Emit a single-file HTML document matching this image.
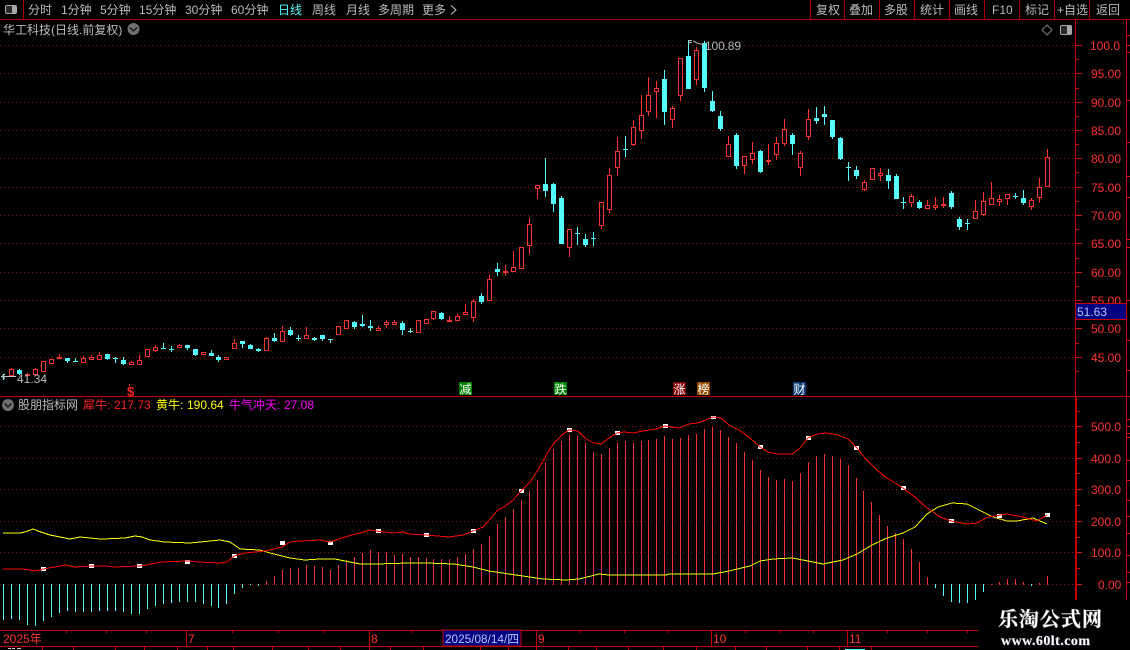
<!DOCTYPE html>
<html lang="zh"><head><meta charset="utf-8"><title>华工科技</title>
<style>
html,body{margin:0;padding:0;background:#000;width:1130px;height:650px;overflow:hidden}
svg{display:block}
text{font-family:"Liberation Sans","WenQuanYi Zen Hei","Noto Sans CJK SC",sans-serif;font-size:12px}
.t{fill:#bcbcbc}
.p{fill:#ff3232}
.c{shape-rendering:crispEdges;fill:none}
</style></head><body>
<svg width="1130" height="650" viewBox="0 0 1130 650" xmlns="http://www.w3.org/2000/svg">
<rect width="1130" height="650" fill="#000"/>

<!-- grid -->
<path class="c" stroke="#7c1212" stroke-dasharray="1 3" d="M0 45.5H1075M0 73.5H1075M0 102.5H1075M0 130.5H1075M0 158.5H1075M0 187.5H1075M0 215.5H1075M0 243.5H1075M0 272.5H1075M0 300.5H1075M0 328.5H1075M0 357.5H1075M0 426.5H1075M0 458.5H1075M0 489.5H1075M0 521.5H1075M0 552.5H1075M0 584.5H1075"/>

<!-- frame -->
<path class="c" stroke="#b40000" d="M0 19.5H1130M23.5 0V19M810.5 0V19M844.5 0V19M879.5 0V19M914.5 0V19M949.5 0V19M984.5 0V19M1019.5 0V19M1054.5 0V19M1089.5 0V19"/>
<path class="c" stroke="#c80000" d="M0 396.5H1130M1126.5 19V600M1075.5 19V397"/>
<path class="c" stroke="#c80000" stroke-width="2" d="M1076 397V600"/>
<path class="c" stroke="#d21414" d="M1076 45.5h6M1076 73.5h6M1076 102.5h6M1076 130.5h6M1076 158.5h6M1076 187.5h6M1076 215.5h6M1076 243.5h6M1076 272.5h6M1076 300.5h6M1076 328.5h6M1076 357.5h6M1076 59.5h3M1076 88.5h3M1076 116.5h3M1076 144.5h3M1076 172.5h3M1076 201.5h3M1076 229.5h3M1076 258.5h3M1076 286.5h3M1076 343.5h3M1076 371.5h3M1077 426.5h5M1077 458.5h5M1077 489.5h5M1077 521.5h5M1077 552.5h5M1077 584.5h5M1077 442.5h3M1077 473.5h3M1077 505.5h3M1077 537.5h3M1077 568.5h3M1077 411.5h3M1127 35.5h3M1127 45.5h3M1127 52.5h3M1127 100.5h3M1127 142.5h3M1127 176.5h3M1127 197.5h3M1127 239.5h3M1127 247.5h3M1127 300.5h3M1127 340.5h3M1127 370.5h3M1127 419.5h3M1127 426.5h3M1127 433.5h3M1127 437.5h3M1127 460.5h3M1127 480.5h3M1127 500.5h3M1127 516.5h3M1127 533.5h3M1127 555.5h3M1127 572.5h3M1127 582.5h3"/>

<!-- time axis -->
<path class="c" stroke="#c80000" d="M0 630.5H978M0 646.5H978M186.5 630v16M369.5 630v16M536.5 630v16M711.5 630v16M847.5 630v16M66.5 630v3M106.5 630v3M146.5 630v3M232.5 630v3M278.5 630v3M323.5 630v3M411.5 630v3M580.5 630v3M624.5 630v3M667.5 630v3M745.5 630v3M779.5 630v3M813.5 630v3M887.5 630v3M927.5 630v3M967.5 630v3M42.5 646v4M73.5 646v4M115.5 646v4M144.5 646v4M177.5 646v4M207.5 646v4M233.5 646v4M272.5 646v4M308.5 646v4M340.5 646v4M369.5 646v4M390.5 646v4M423.5 646v4M480.5 646v4M508.5 646v4M536.5 646v4M568.5 646v4M596.5 646v4M628.5 646v4M663.5 646v4M696.5 646v4M735.5 646v4M766.5 646v4M807.5 646v4M839.5 646v4M871.5 646v4"/>
<rect x="443" y="630" width="78" height="16" fill="#000080" stroke="#c80000" shape-rendering="crispEdges"/>
<text class="p" x="3" y="643">2025年</text>
<text class="p" x="188" y="643">7</text>
<text class="p" x="371" y="643">8</text>
<text x="445" y="643" fill="#b8c8ff" textLength="74" lengthAdjust="spacingAndGlyphs">2025/08/14/四</text>
<text class="p" x="538" y="643">9</text>
<text class="p" x="713" y="643">10</text>
<text class="p" x="849" y="643">11</text>
<path class="c" stroke="#ccc" d="M8 648.5h3M12 648.5h3M17 648.5h4"/>
<path class="c" stroke="#54fcfc" d="M845 649.5h20"/>

<!-- toolbar -->
<rect x="5.5" y="5.5" width="11" height="8" rx="1.5" fill="#2a2a2a" stroke="#a8a8a8"/>
<rect x="12" y="6" width="4" height="7" fill="#a8a8a8"/>
<text class="t" x="28" y="14">分时</text>
<text class="t" x="61" y="14">1分钟</text>
<text class="t" x="100" y="14">5分钟</text>
<text class="t" x="139" y="14">15分钟</text>
<text class="t" x="185" y="14">30分钟</text>
<text class="t" x="231" y="14">60分钟</text>
<text x="278" y="14" fill="#54fcfc">日线</text>
<text class="t" x="312" y="14">周线</text>
<text class="t" x="346" y="14">月线</text>
<text class="t" x="378" y="14">多周期</text>
<text class="t" x="422" y="14">更多</text>
<path d="M451 5.5l5 4.5-5 4.5" fill="none" stroke="#c4c4c4"/>
<text class="t" x="816" y="14">复权</text>
<text class="t" x="849" y="14">叠加</text>
<text class="t" x="884" y="14">多股</text>
<text class="t" x="920" y="14">统计</text>
<text class="t" x="954" y="14">画线</text>
<text class="t" x="992" y="14">F10</text>
<text class="t" x="1025" y="14">标记</text>
<text class="t" x="1057" y="14">+自选</text>
<text class="t" x="1096" y="14">返回</text>

<!-- title -->
<text class="t" x="3" y="34">华工科技(日线.前复权)</text>
<circle cx="133.5" cy="29" r="6" fill="#707070"/>
<path d="M130 27.5l3.5 3.5 3.5-3.5" fill="none" stroke="#111" stroke-width="1.3"/>
<path d="M1047 25l5 5-5 5-5-5z" fill="none" stroke="#808080"/>
<rect x="1060.5" y="25.5" width="11" height="9" rx="1.5" fill="#2a2a2a" stroke="#a8a8a8"/>
<rect x="1067" y="26" width="4" height="8" fill="#a8a8a8"/>

<!-- price labels -->
<text class="p" x="1090" y="50">100.0</text>
<text class="p" x="1091" y="78">95.00</text>
<text class="p" x="1091" y="107">90.00</text>
<text class="p" x="1091" y="135">85.00</text>
<text class="p" x="1091" y="163">80.00</text>
<text class="p" x="1091" y="192">75.00</text>
<text class="p" x="1091" y="220">70.00</text>
<text class="p" x="1091" y="248">65.00</text>
<text class="p" x="1091" y="277">60.00</text>
<text class="p" x="1091" y="305">55.00</text>
<text class="p" x="1091" y="333">50.00</text>
<text class="p" x="1091" y="362">45.00</text>
<rect x="1075.5" y="303.5" width="51" height="16" fill="#000080" stroke="#c80000" shape-rendering="crispEdges"/>
<text x="1077" y="316" fill="#b8c8ff">51.63</text>

<!-- red candles -->
<path class="c" stroke="#ff3232" d="M9.5 369.5h4v6h-4zM11.5 368v1M25.5 374.5h4v1h-4zM27.5 373v1M27.5 376v1M33.5 369.5h4v5h-4zM35.5 368v1M41.5 361.5h4v10h-4zM49.5 359.5h4v4h-4zM57.5 357.5h4v1h-4zM59.5 354v3M81.5 358.5h4v4h-4zM83.5 356v2M89.5 357.5h4v2h-4zM91.5 355v2M97.5 355.5h4v4h-4zM99.5 352v3M129.5 362.5h4v2h-4zM131.5 361v1M137.5 360.5h4v4h-4zM139.5 355v5M145.5 349.5h4v7h-4zM153.5 347.5h4v3h-4zM155.5 345v2M155.5 351v1M177.5 345.5h4v2h-4zM179.5 344v1M201.5 352.5h4v2h-4zM224.5 357.5h4v2h-4zM232.5 343.5h4v5h-4zM234.5 339v4M264.5 338.5h4v12h-4zM266.5 337v1M280.5 331.5h4v10h-4zM282.5 326v5M304.5 335.5h4v3h-4zM306.5 327v8M336.5 326.5h4v8h-4zM344.5 320.5h4v8h-4zM376.5 328.5h4v2h-4zM378.5 326v2M384.5 322.5h4v2h-4zM386.5 320v2M386.5 325v3M392.5 322.5h4v2h-4zM394.5 320v2M416.5 320.5h4v12h-4zM424.5 319.5h4v4h-4zM431.5 311.5h4v7h-4zM433.5 319v1M447.5 320.5h4v1h-4zM449.5 316v4M455.5 316.5h4v4h-4zM457.5 314v2M463.5 312.5h4v2h-4zM465.5 304v8M471.5 301.5h4v16h-4zM473.5 299v2M473.5 318v4M487.5 279.5h4v21h-4zM489.5 275v4M503.5 271.5h4v1h-4zM505.5 265v6M505.5 273v3M511.5 267.5h4v4h-4zM513.5 251v16M519.5 247.5h4v21h-4zM527.5 224.5h4v21h-4zM529.5 218v6M529.5 246v8M535.5 185.5h4v3h-4zM537.5 189v10M567.5 229.5h4v18h-4zM569.5 248v9M599.5 202.5h4v23h-4zM601.5 226v3M607.5 175.5h4v34h-4zM609.5 168v7M609.5 210v3M615.5 151.5h4v16h-4zM617.5 137v14M617.5 168v8M631.5 127.5h4v17h-4zM633.5 120v7M633.5 145v1M639.5 115.5h4v15h-4zM641.5 95v20M641.5 131v8M646.5 95.5h4v16h-4zM648.5 77v18M648.5 112v4M654.5 88.5h4v3h-4zM656.5 81v7M656.5 92v26M670.5 108.5h4v11h-4zM672.5 106v2M672.5 120v8M678.5 58.5h4v37h-4zM680.5 96v5M694.5 50.5h4v29h-4zM696.5 47v3M696.5 80v5M726.5 144.5h4v12h-4zM728.5 136v8M742.5 156.5h4v9h-4zM744.5 166v8M750.5 153.5h4v6h-4zM752.5 142v11M752.5 160v4M766.5 160.5h4v1h-4zM768.5 144v16M768.5 162v3M774.5 143.5h4v11h-4zM776.5 137v6M776.5 155v5M782.5 129.5h4v14h-4zM784.5 119v10M784.5 144v2M798.5 153.5h4v14h-4zM800.5 151v2M800.5 168v8M806.5 119.5h4v17h-4zM808.5 109v10M808.5 137v3M862.5 182.5h4v7h-4zM864.5 180v2M864.5 190v1M870.5 168.5h4v11h-4zM878.5 173.5h4v2h-4zM880.5 168v5M880.5 176v5M909.5 196.5h4v6h-4zM911.5 194v2M911.5 203v4M925.5 205.5h4v3h-4zM927.5 200v5M933.5 205.5h4v2h-4zM935.5 197v8M935.5 208v2M941.5 204.5h4v1h-4zM943.5 197v7M943.5 206v2M973.5 211.5h4v7h-4zM975.5 200v11M981.5 201.5h4v13h-4zM983.5 192v9M983.5 215v1M989.5 198.5h4v6h-4zM991.5 182v16M997.5 199.5h4v2h-4zM999.5 195v4M999.5 201v5M1005.5 194.5h4v4h-4zM1007.5 199v6M1029.5 200.5h4v6h-4zM1031.5 198v2M1031.5 207v3M1037.5 187.5h4v10h-4zM1039.5 178v9M1039.5 198v5M1045.5 157.5h4v29h-4zM1047.5 149v8"/>

<!-- cyan wicks -->
<path class="c" stroke="#54fcfc" d="M3.5 374V380M19.5 369V375M67.5 358V363M75.5 358V362M107.5 354V360M115.5 357V363M123.5 357V365M163.5 343V349M171.5 346V352M187.5 345V350M195.5 349V356M211.5 350V356M218.5 355V362M242.5 341V348M250.5 344V349M258.5 348V352M274.5 333V342M290.5 327V336M298.5 335V341M314.5 337V341M322.5 335V341M330.5 339V343M354.5 321V329M362.5 315V327M370.5 320V331M402.5 321V335M410.5 328V333M441.5 312V320M481.5 293V304M497.5 263V276M545.5 158V197M553.5 183V212M561.5 196V244M577.5 227V245M585.5 234V247M593.5 232V246M625.5 136V157M664.5 70V125M688.5 40V89M704.5 41V92M712.5 91V112M720.5 111V131M736.5 133V169M760.5 150V173M792.5 133V155M816.5 107V124M824.5 106V125M832.5 120V139M840.5 137V160M848.5 162V181M856.5 166V179M888.5 169V189M896.5 174V199M903.5 197V209M919.5 200V209M951.5 191V209M959.5 217V230M967.5 219V230M1015.5 193V199M1023.5 190V205"/>
<!-- cyan bodies -->
<path class="c" stroke="#54fcfc" stroke-width="5" d="M3.5 376V377M19.5 370V374M67.5 358V361M75.5 361V362M107.5 354V359M115.5 358V359M123.5 360V364M163.5 348V349M171.5 349V350M187.5 345V348M195.5 349V355M211.5 353V356M218.5 357V360M242.5 341V344M250.5 345V349M258.5 349V351M274.5 338V341M290.5 330V335M298.5 338V339M314.5 338V340M322.5 335V339M330.5 339V340M354.5 322V327M362.5 324V326M370.5 326V328M402.5 323V330M410.5 331V332M441.5 313V319M481.5 296V302M497.5 269V272M545.5 184V191M553.5 184V204M561.5 198V244M577.5 233V234M585.5 239V245M593.5 238V239M625.5 149V150M664.5 79V112M688.5 56V89M704.5 43V88M712.5 101V111M720.5 116V129M736.5 135V166M760.5 151V172M792.5 135V144M816.5 118V121M824.5 114V117M832.5 120V137M840.5 138V159M848.5 167V168M856.5 170V176M888.5 175V181M896.5 176V199M903.5 202V203M919.5 202V208M951.5 193V207M959.5 219V227M967.5 223V224M1015.5 196V197M1023.5 198V203"/>

<!-- labels on chart -->
<path d="M2 376.5h14M2 376.5l3-2.5M2 376.5l3 2.5" fill="none" stroke="#c4c4c4" class="c"/>
<text class="t" x="17" y="383">41.34</text>
<path d="M689 40.5h3M689 40.5v4M689 42.5h3M693 41l4 2 4 1 3 .5" fill="none" stroke="#b4b4b4"/>
<text x="705" y="50" fill="#b4b4b4" textLength="36">100.89</text>

<!-- tags -->
<text x="127" y="396" fill="#ff2020" font-weight="bold" style="font-size:13px">$</text>
<path class="c" stroke="#ff2020" d="M129.5 384v2"/>
<rect x="459" y="382" width="13" height="13" fill="#008000"/><text x="459.5" y="393.5" fill="#fff">减</text>
<rect x="554" y="382" width="13" height="13" fill="#008000"/><text x="554.5" y="393.5" fill="#fff">跌</text>
<rect x="673" y="382" width="13" height="13" fill="#800000"/><text x="673.5" y="393.5" fill="#fff">涨</text>
<rect x="697" y="382" width="13" height="13" fill="#964b00"/><text x="697.5" y="393.5" fill="#fff">榜</text>
<rect x="793" y="382" width="13" height="13" fill="#0a3c78"/><text x="793.5" y="393.5" fill="#fff">财</text>

<!-- legend -->
<circle cx="8" cy="405" r="6" fill="#707070"/>
<path d="M4.5 403.5l3.5 3.5 3.5-3.5" fill="none" stroke="#111" stroke-width="1.3"/>
<text class="t" x="18" y="409">股朋指标网</text>
<text x="83" y="409" fill="#ff2020">犀牛:</text><text x="114" y="409" fill="#ff2020">217.73</text>
<text x="156" y="409" fill="#ffff00">黄牛:</text><text x="187" y="409" fill="#ffff00">190.64</text>
<text x="229" y="409" fill="#ff00ff">牛气冲天:</text><text x="284" y="409" fill="#ff00ff">27.08</text>

<!-- lower labels -->
<text class="p" x="1091" y="431">500.0</text>
<text class="p" x="1091" y="463">400.0</text>
<text class="p" x="1091" y="494">300.0</text>
<text class="p" x="1091" y="526">200.0</text>
<text class="p" x="1091" y="557">100.0</text>
<text class="p" x="1098" y="589">0.00</text>

<!-- bars -->
<path class="c" stroke="#54fcfc" d="M3.5 584V620M11.5 584V619M19.5 584V620M27.5 584V625M35.5 584V626M43.5 584V621M51.5 584V617M59.5 584V613M67.5 584V611M75.5 584V612M83.5 584V612M91.5 584V612M99.5 584V611M107.5 584V611M115.5 584V611M123.5 584V612M131.5 584V614M139.5 584V614M147.5 584V609M155.5 584V606M163.5 584V604M171.5 584V603M179.5 584V602M187.5 584V602M195.5 584V602M203.5 584V604M211.5 584V606M218.5 584V608M226.5 584V604M234.5 584V594M242.5 584V588M250.5 584V585M258.5 584V586M935.5 584V588M943.5 584V596M951.5 584V602M959.5 584V603M967.5 584V603M975.5 584V600M983.5 584V592M1031.5 584V586"/>
<path class="c" stroke="#f03434" d="M266.5 585V581M274.5 585V576M282.5 585V570M290.5 585V568M298.5 585V568M306.5 585V565M314.5 585V566M322.5 585V567M330.5 585V570M338.5 585V565M346.5 585V560M354.5 585V557M362.5 585V553M370.5 585V550M378.5 585V552M386.5 585V552M394.5 585V555M402.5 585V554M410.5 585V557M418.5 585V557M426.5 585V558M433.5 585V559M441.5 585V559M449.5 585V559M457.5 585V557M465.5 585V554M473.5 585V549M481.5 585V544M489.5 585V536M497.5 585V524M505.5 585V517M513.5 585V509M521.5 585V500M529.5 585V491M537.5 585V480M545.5 585V462M553.5 585V449M561.5 585V441M569.5 585V435M577.5 585V436M585.5 585V443M593.5 585V452M601.5 585V454M609.5 585V448M617.5 585V443M625.5 585V441M633.5 585V443M641.5 585V441M648.5 585V440M656.5 585V439M664.5 585V436M672.5 585V439M680.5 585V438M688.5 585V435M696.5 585V434M704.5 585V429M712.5 585V427M720.5 585V430M728.5 585V437M736.5 585V443M744.5 585V452M752.5 585V460M760.5 585V470M768.5 585V477M776.5 585V480M784.5 585V479M792.5 585V481M800.5 585V473M808.5 585V462M816.5 585V456M824.5 585V454M832.5 585V456M840.5 585V459M848.5 585V465M856.5 585V478M863.5 585V491M871.5 585V502M879.5 585V515M887.5 585V526M895.5 585V533M903.5 585V539M911.5 585V549M919.5 585V562M927.5 585V577M991.5 585V584M999.5 585V582M1007.5 585V579M1015.5 585V579M1023.5 585V582M1039.5 585V583M1047.5 585V576"/>

<!-- markers -->
<g fill="#fff" shape-rendering="crispEdges">
<rect x="41" y="567" width="5" height="4"/><rect x="89" y="564" width="5" height="4"/><rect x="137" y="564" width="5" height="4"/><rect x="185" y="560" width="5" height="4"/><rect x="232" y="554" width="5" height="4"/><rect x="280" y="541" width="5" height="4"/><rect x="328" y="541" width="5" height="4"/><rect x="376" y="529" width="5" height="4"/><rect x="424" y="533" width="5" height="4"/><rect x="471" y="529" width="5" height="4"/><rect x="519" y="489" width="5" height="4"/><rect x="567" y="428" width="5" height="4"/><rect x="615" y="431" width="5" height="4"/><rect x="663" y="424" width="5" height="4"/><rect x="711" y="416" width="5" height="3"/><rect x="758" y="445" width="5" height="4"/><rect x="806" y="436" width="5" height="4"/><rect x="854" y="446" width="5" height="4"/><rect x="901" y="486" width="5" height="4"/><rect x="949" y="519" width="5" height="4"/><rect x="997" y="514" width="5" height="4"/><rect x="1045" y="513" width="5" height="4"/>
</g>

<!-- curves -->
<polyline class="c" stroke="#ffff00" points="3,533 20,533 25,532 33,529 38,531 50,535 60,537 70,539 80,537 100,539 103,539 125,538 135,536 142,537 150,540 165,542 190,543 210,541 220,540 230,542 240,549 260,550 270,553 290,558 305,560 320,559 335,559 350,562 360,564 376,564 409,563 426,563 454,564 473,567 489,571 509,574 523,576 543,579 566,580 579,579 599,574 609,575 666,575 669,574 713,574 729,571 750,566 760,561 773,559 792,558 803,560 823,564 843,560 857,554 872,545 887,538 903,533 915,527 927,514 938,507 952,503 967,504 983,512 993,517 1007,521 1017,521 1033,518 1047,524"/>
<polyline class="c" stroke="#ff0000" points="3,569 23,569 30,570 35,571 43,569 55,567 65,565 75,567 91,566 105,566 115,567 139,566 147,565 160,562 187,561 200,562 220,563 227,562 234,556 245,553 265,551 282,547 290,542 300,541 320,540 330,542 345,537 360,533 370,530 376,531 393,533 403,532 409,534 426,535 449,537 463,535 473,531 483,527 491,518 498,510 504,507 513,500 521,491 531,481 539,468 547,454 554,443 563,434 569,430 578,431 586,439 594,443 601,444 609,438 617,433 624,432 633,433 643,431 656,429 665,426 679,428 689,424 698,423 713,417 721,418 729,425 739,430 750,438 760,447 768,452 777,454 792,454 800,448 808,438 817,434 826,433 838,435 848,439 857,448 865,458 878,471 887,478 903,488 915,497 927,508 940,517 951,521 967,524 977,523 988,517 1007,514 1023,517 1037,521 1047,515"/>

<!-- watermark -->
<text x="998" y="626" fill="#fff" font-weight="bold" style="font-size:20px;font-family:'Noto Serif CJK SC','Noto Sans CJK SC',sans-serif;paint-order:stroke;stroke:#444;stroke-width:1px" textLength="104">乐淘公式网</text>
<text x="1001" y="645" fill="#fff" font-weight="bold" style="font-size:14px;font-family:'Liberation Serif',serif;paint-order:stroke;stroke:#334;stroke-width:1px" textLength="89">www.60lt.com</text>
</svg>
</body></html>
